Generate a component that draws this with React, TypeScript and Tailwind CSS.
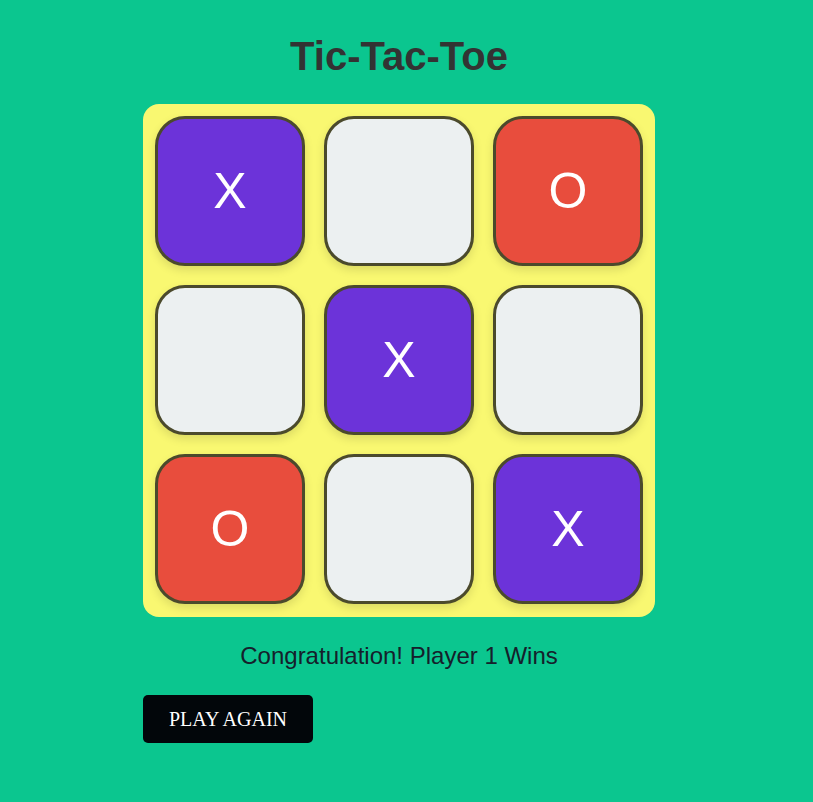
const cells = ["X", "", "O", "", "X", "", "O", "", "X"];

const Cell = ({ value }: { value: string }) => {
  const color =
    value === "X" ? "bg-[#6c33d9]" : value === "O" ? "bg-[#e84d3d]" : "bg-[#ecf0f1]";
  return (
    <div
      className={`${color} w-[150px] h-[150px] rounded-[30px] border-[3px] border-[#4b4a2c] flex items-center justify-center text-white text-[50px] shadow-[0_4px_10px_rgba(0,0,0,0.12)]`}
    >
      {value}
    </div>
  );
};

export default function App() {
  return (
    <div className="min-h-[802px] bg-[#0bc68f] font-['Liberation_Sans',Arial,sans-serif]">
      <div className="w-[798px]">
        <div className="w-[512px] mx-auto pt-[33px] pb-[59px]">
          <h1 className="text-center text-[40px] leading-[46px] font-bold text-[#333333]">
            Tic-Tac-Toe
          </h1>
          <div className="mt-[25px] bg-[#f9f871] rounded-[16px] pt-[12px] pb-[13px] px-[12px] grid grid-cols-3 gap-x-[19px] gap-y-[19px]">
            {cells.map((v, i) => (
              <Cell key={i} value={v} />
            ))}
          </div>
          <p className="mt-[24px] text-center text-[24px] leading-[30px] text-[#15202b]">
            Congratulation! Player 1 Wins
          </p>
          <button className="mt-[24px] w-[170px] h-[48px] rounded-[5px] bg-[#02060a] text-white text-[20px] font-['Liberation_Serif','Times_New_Roman',serif]">
            PLAY AGAIN
          </button>
        </div>
      </div>
    </div>
  );
}
